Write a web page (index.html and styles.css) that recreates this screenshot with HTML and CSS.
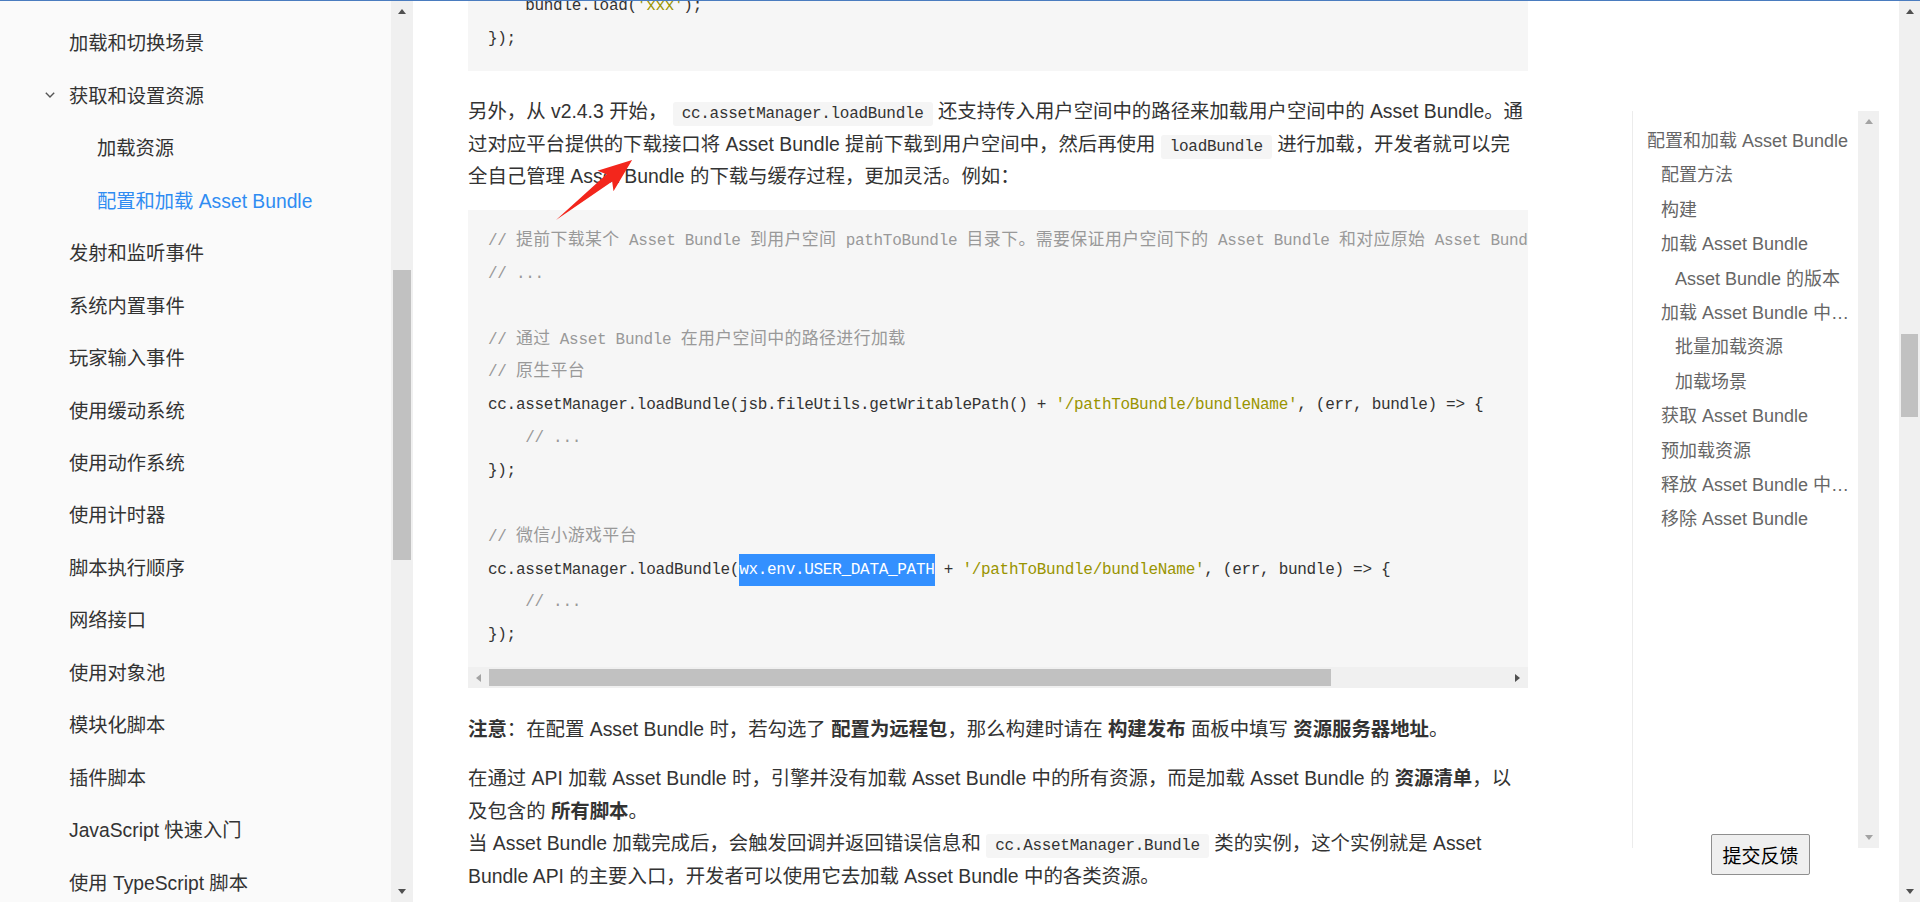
FILE: index.html
```html
<!DOCTYPE html>
<html lang="zh-CN">
<head>
<meta charset="utf-8">
<title>配置和加载 Asset Bundle</title>
<link rel="stylesheet" href="styles.css">
</head>
<body>
<div class="topline"></div>
<div class="layout">
  <aside class="sidebar">
    <nav class="nav">
      <ul class="nav-list">
        <li class="nav-item">加载和切换场景</li>
        <li class="nav-item open"><svg class="chev" viewBox="0 0 10 6"><polyline points="0.8,0.8 5,5 9.2,0.8"/></svg>获取和设置资源</li>
        <li class="nav-item sub">加载资源</li>
        <li class="nav-item sub active">配置和加载 Asset Bundle</li>
        <li class="nav-item">发射和监听事件</li>
        <li class="nav-item">系统内置事件</li>
        <li class="nav-item">玩家输入事件</li>
        <li class="nav-item">使用缓动系统</li>
        <li class="nav-item">使用动作系统</li>
        <li class="nav-item">使用计时器</li>
        <li class="nav-item">脚本执行顺序</li>
        <li class="nav-item">网络接口</li>
        <li class="nav-item">使用对象池</li>
        <li class="nav-item">模块化脚本</li>
        <li class="nav-item">插件脚本</li>
        <li class="nav-item">JavaScript 快速入门</li>
        <li class="nav-item">使用 TypeScript 脚本</li>
      </ul>
    </nav>
    <div class="vscroll side-scroll">
      <span class="sb-btn"><i class="tri-up"></i></span>
      <div class="sb-track"><div class="sb-thumb" style="margin-top:248px;height:290px"></div></div>
      <span class="sb-btn"><i class="tri-down"></i></span>
    </div>
  </aside>

  <main class="main">
    <article class="content">
      <div class="code-block first">
        <div class="code">
          <div class="ln">    bundle.load(<span class="s">'xxx'</span>);</div>
          <div class="ln">});</div>
        </div>
      </div>

      <p>另外，从 v2.4.3 开始， <code class="inline">cc.assetManager.loadBundle</code> 还支持传入用户空间中的路径来加载用户空间中的 Asset Bundle。通过对应平台提供的下载接口将 Asset Bundle 提前下载到用户空间中，然后再使用 <code class="inline">loadBundle</code> 进行加载，开发者就可以完全自己管理 Asset Bundle 的下载与缓存过程，更加灵活。例如：</p>

      <div class="code-block">
        <div class="code">
          <div class="ln"><span class="c">// <span class="zh">提前下载某个</span> Asset Bundle <span class="zh">到用户空间</span> pathToBundle <span class="zh">目录下。需要保证用户空间下的</span> Asset Bundle <span class="zh">和对应原始</span> Asset Bundle <span class="zh">的结构和内容完全一样</span></span></div>
          <div class="ln"><span class="c">// ...</span></div>
          <div class="ln"></div>
          <div class="ln"><span class="c">// <span class="zh">通过</span> Asset Bundle <span class="zh">在用户空间中的路径进行加载</span></span></div>
          <div class="ln"><span class="c">// <span class="zh">原生平台</span></span></div>
          <div class="ln">cc.assetManager.loadBundle(jsb.fileUtils.getWritablePath() + <span class="s">'/pathToBundle/bundleName'</span>, (err, bundle) =&gt; {</div>
          <div class="ln">    <span class="c">// ...</span></div>
          <div class="ln">});</div>
          <div class="ln"></div>
          <div class="ln"><span class="c">// <span class="zh">微信小游戏平台</span></span></div>
          <div class="ln">cc.assetManager.loadBundle(<span class="sel">wx.env.USER_DATA_PATH</span> + <span class="s">'/pathToBundle/bundleName'</span>, (err, bundle) =&gt; {</div>
          <div class="ln">    <span class="c">// ...</span></div>
          <div class="ln">});</div>
        </div>
        <div class="hscroll">
          <span class="sb-btn"><i class="tri-left dim"></i></span>
          <div class="hs-track"><div class="hs-thumb" style="width:842px"></div></div>
          <span class="sb-btn"><i class="tri-right"></i></span>
        </div>
      </div>

      <p><strong>注意</strong>：在配置 Asset Bundle 时，若勾选了 <strong>配置为远程包</strong>，那么构建时请在 <strong>构建发布</strong> 面板中填写 <strong>资源服务器地址</strong>。</p>

      <p>在通过 API 加载 Asset Bundle 时，引擎并没有加载 Asset Bundle 中的所有资源，而是加载 Asset Bundle 的 <strong>资源清单</strong>，以及包含的 <strong>所有脚本</strong>。<br>当 Asset Bundle 加载完成后，会触发回调并返回错误信息和 <code class="inline">cc.AssetManager.Bundle</code> 类的实例，这个实例就是 Asset Bundle API 的主要入口，开发者可以使用它去加载 Asset Bundle 中的各类资源。</p>
    </article>

    <aside class="toc">
      <ul class="toc-list">
        <li class="toc-item l1">配置和加载 Asset Bundle</li>
        <li class="toc-item l2">配置方法</li>
        <li class="toc-item l2">构建</li>
        <li class="toc-item l2">加载 Asset Bundle</li>
        <li class="toc-item l3">Asset Bundle 的版本</li>
        <li class="toc-item l2">加载 Asset Bundle 中的资源</li>
        <li class="toc-item l3">批量加载资源</li>
        <li class="toc-item l3">加载场景</li>
        <li class="toc-item l2">获取 Asset Bundle</li>
        <li class="toc-item l2">预加载资源</li>
        <li class="toc-item l2">释放 Asset Bundle 中的资源</li>
        <li class="toc-item l2">移除 Asset Bundle</li>
      </ul>
      <div class="vscroll toc-scroll">
        <span class="sb-btn"><i class="tri-up dim"></i></span>
        <div class="sb-track"></div>
        <span class="sb-btn"><i class="tri-down dim"></i></span>
      </div>
    </aside>
  </main>

  <div class="vscroll page-scroll">
    <span class="sb-btn"><i class="tri-up"></i></span>
    <div class="sb-track"><div class="sb-thumb" style="margin-top:312px;height:83px"></div></div>
    <span class="sb-btn"><i class="tri-down"></i></span>
  </div>
</div>

<button class="feedback" type="button">提交反馈</button>

<svg class="annot-arrow" width="110" height="100" viewBox="0 0 110 100">
  <polygon transform="translate(16,80) rotate(-38.3)" points="0,0 68,-4.5 63,-13 97,0 63,13 68,4.5"/>
</svg>
</body>
</html>
```

FILE: styles.css
```css
* { box-sizing: border-box; }

html, body {
  margin: 0;
  padding: 0;
}

body {
  width: 1920px;
  height: 902px;
  overflow: hidden;
  background: #fff;
  color: #333;
  font-family: "Liberation Sans", "Noto Sans CJK SC", sans-serif;
}

.topline {
  height: 1px;
  background: #4a7cbf;
}

.layout {
  display: flex;
  height: 901px;
}

/* ---------- left navigation ---------- */
.sidebar {
  display: flex;
  width: 413px;
  flex: none;
}

.nav {
  flex: 1;
  background: #fafafa;
  overflow: hidden;
}

.nav-list {
  list-style: none;
  margin: 0;
  padding: 15px 0 0;
}

.nav-item {
  display: flex;
  align-items: center;
  height: 52.47px;
  padding-left: 69px;
  font-size: 19.3px;
  color: #333;
  white-space: nowrap;
}

.nav-item.open { padding-left: 45px; }
.nav-item.sub { padding-left: 97px; }
.nav-item.active { color: #2f8cf2; }

.chev {
  width: 10px;
  height: 6px;
  margin-right: 14px;
  fill: none;
  stroke: #555;
  stroke-width: 1.4;
}

/* ---------- scrollbars ---------- */
.vscroll {
  width: 21px;
  flex: none;
  display: flex;
  flex-direction: column;
  background: #f0f0f0;
}

.side-scroll { width: 22px; }

.sb-btn {
  flex: none;
  width: 21px;
  height: 21px;
  display: flex;
  align-items: center;
  justify-content: center;
}

.sb-track {
  flex: 1;
  padding: 0 2px;
}

.sb-thumb { background: #c1c1c1; }

.tri-up, .tri-down, .tri-left, .tri-right {
  display: block;
  width: 0;
  height: 0;
}

.tri-up {
  border-left: 4.5px solid transparent;
  border-right: 4.5px solid transparent;
  border-bottom: 5px solid #505050;
}

.tri-down {
  border-left: 4.5px solid transparent;
  border-right: 4.5px solid transparent;
  border-top: 5px solid #505050;
}

.tri-left {
  border-top: 4.5px solid transparent;
  border-bottom: 4.5px solid transparent;
  border-right: 5px solid #505050;
}

.tri-right {
  border-top: 4.5px solid transparent;
  border-bottom: 4.5px solid transparent;
  border-left: 5px solid #505050;
}

.tri-up.dim { border-bottom-color: #a3a3a3; }
.tri-down.dim { border-top-color: #a3a3a3; }
.tri-left.dim { border-right-color: #a3a3a3; }

/* ---------- main content ---------- */
.main {
  flex: 1;
  display: flex;
  align-items: flex-start;
  overflow: hidden;
}

.content {
  width: 1060px;
  flex: none;
  margin-left: 55px;
  font-size: 19.4px;
  line-height: 32.6px;
}

.content p {
  margin: 17px 0;
}

.content strong { font-weight: bold; }

code.inline {
  font-family: "Liberation Mono", monospace;
  font-size: 16px;
  line-height: 16px;
  letter-spacing: -0.3px;
  background: #f5f5f5;
  padding: 3px 9px;
  border-radius: 3px;
}

.code-block {
  background: #f6f6f6;
  margin: 17px 0 24.5px;
}

.code-block.first { margin-top: -26px; }

.code {
  padding: 15px 20px;
  overflow: hidden;
  font-family: "Liberation Mono", monospace;
  font-size: 16px;
  letter-spacing: -0.3px;
  line-height: 32.86px;
  color: #333;
}

.ln {
  height: 32.86px;
  white-space: pre;
}

.code .zh {
  font-family: "Noto Sans CJK SC", sans-serif;
  font-size: 16.9px;
  line-height: 16px;
  letter-spacing: 0.4px;
}

.code .c { color: #999; }
.code .s { color: #999400; }

.code .sel {
  display: inline-block;
  vertical-align: top;
  background: #3390ff;
  color: #fff;
}

.hscroll {
  display: flex;
  height: 21px;
  background: #f0f0f0;
}

.hs-track {
  flex: 1;
  padding: 2px 0;
}

.hs-thumb {
  height: 17px;
  background: #c1c1c1;
}

/* ---------- table of contents ---------- */
.toc {
  flex: none;
  display: flex;
  width: 247px;
  height: 737px;
  margin-top: 110px;
  margin-left: 104px;
  border-left: 1px solid #ececec;
}

.toc-list {
  flex: 1;
  min-width: 0;
  list-style: none;
  margin: 0;
  padding: 13px 5px 0 14px;
}

.toc-item {
  height: 34.4px;
  line-height: 34.4px;
  font-size: 18px;
  color: #666;
  white-space: nowrap;
  overflow: hidden;
  text-overflow: ellipsis;
}

.toc-item.l2 { padding-left: 14px; }
.toc-item.l3 { padding-left: 28px; }

.toc-scroll { background: #f0f0f0; }

/* ---------- overlays ---------- */
.feedback {
  position: fixed;
  left: 1711px;
  top: 834px;
  width: 99px;
  height: 41px;
  padding: 0;
  font-family: "Noto Sans CJK SC", sans-serif;
  font-size: 19px;
  color: #000;
  background: #efefef;
  border: 1px solid #8f8f8f;
  border-radius: 2px;
}

.annot-arrow {
  position: fixed;
  left: 540px;
  top: 140px;
  fill: #f3261c;
}
```
